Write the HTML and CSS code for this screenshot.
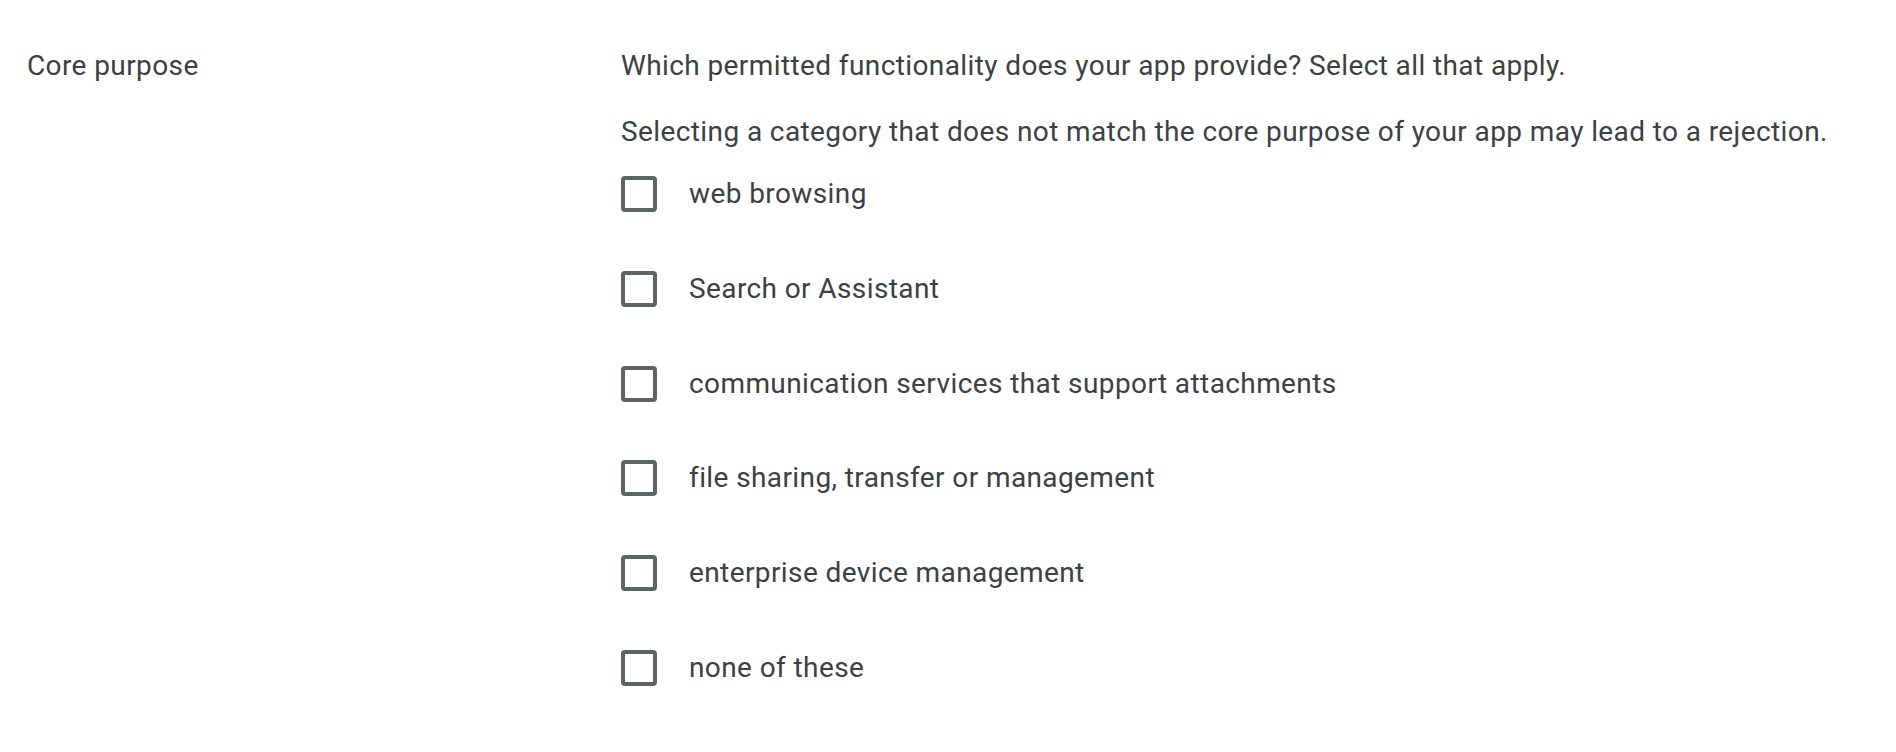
FILE: index.html
```html
<!DOCTYPE html>
<html>
<head>
<meta charset="utf-8">
<link rel="stylesheet" href="styles.css">
</head>
<body>
<section class="field">
  <div class="field-label">Core purpose</div>
  <div class="field-body">
    <p class="question">Which permitted functionality does your app provide? Select all that apply.</p>
    <p class="hint">Selecting a category that does not match the core purpose of your app may lead to a rejection.</p>
    <ul class="options">
      <li class="option"><span class="checkbox"></span><span class="option-text">web browsing</span></li>
      <li class="option"><span class="checkbox"></span><span class="option-text">Search or Assistant</span></li>
      <li class="option"><span class="checkbox"></span><span class="option-text">communication services that support attachments</span></li>
      <li class="option"><span class="checkbox"></span><span class="option-text">file sharing, transfer or management</span></li>
      <li class="option"><span class="checkbox"></span><span class="option-text">enterprise device management</span></li>
      <li class="option"><span class="checkbox"></span><span class="option-text">none of these</span></li>
    </ul>
  </div>
</section>
</body>
</html>
```
FILE: styles.css
```css
html, body {
  margin: 0;
  padding: 0;
  background: #ffffff;
}
body {
  font-family: Roboto, "Liberation Sans", Arial, sans-serif;
  font-size: 28px;
  line-height: 40px;
  letter-spacing: 0.4px;
  color: #3c4043;
}
.field {
  display: flex;
  padding: 46px 0 0 27px;
}
.field-label {
  width: 594px;
  flex: none;
}
.field-body {
  flex: 1;
}
.question, .hint {
  margin: 0;
}
.hint {
  margin-top: 26px;
}
.options {
  list-style: none;
  margin: 24px 0 0 0;
  padding: 0;
  display: flex;
  flex-direction: column;
  gap: 58.8px;
}
.option {
  display: flex;
  align-items: center;
  height: 36px;
}
.checkbox {
  width: 36px;
  height: 36px;
  box-sizing: border-box;
  border: 4px solid #5f6368;
  border-radius: 4px;
  flex: none;
  margin-right: 32px;
}
```
